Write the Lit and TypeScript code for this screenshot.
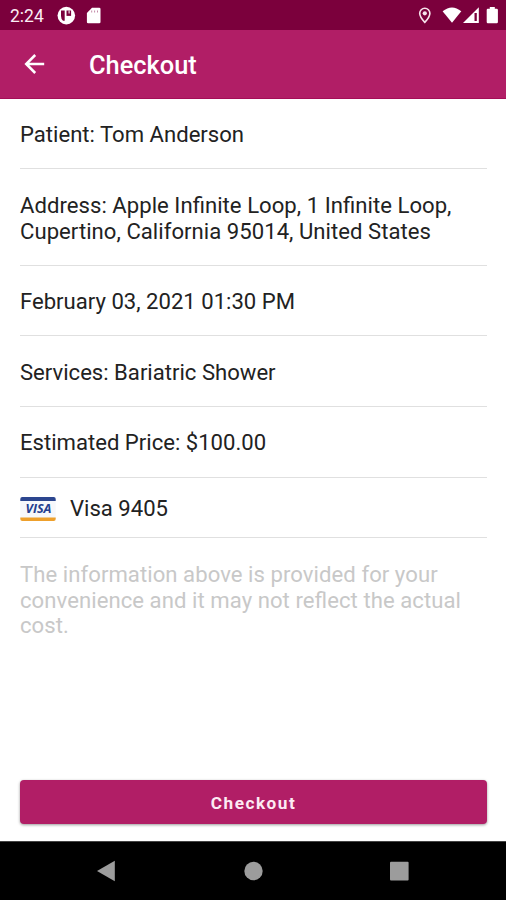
import { LitElement, html, css, svg } from "lit";
import { customElement, property } from "lit/decorators.js";

@customElement("status-bar")
class StatusBar extends LitElement {
  static styles = css`
    :host {
      display: flex;
      align-items: center;
      height: 30px;
      background: #7b003c;
      color: #fbeef4;
      font: 400 17.5px/30px Roboto, sans-serif;
    }
    .time { margin-left: 10px; width: 47px; padding-top: 2px; white-space: nowrap; }
    .left { display: block; width: 46px; height: 30px; }
    .right { display: block; width: 92px; height: 30px; margin-left: auto; }
  `;
  render() {
    return html`
      <span class="time">2:24</span>
      <svg class="left" viewBox="57 0 46 30">
        <circle cx="66.3" cy="15.6" r="8.8" fill="#fff" />
        <path d="M61 10.5h3.7v10.2H63a6 6 0 0 1-2-4.6z" fill="#7b003c" />
        <path d="M66.5 10.5h4.6v5.4h-4.6z" fill="#7b003c" />
        <path d="M68.6 10.500h1v3h-1z" fill="#fff" />
        <path d="M92 7.8h7.2a1.3 1.3 0 0 1 1.3 1.3v12.8a1.3 1.3 0 0 1-1.300 1.300h-11a1.300 1.300 0 0 1-1.300-1.300v-9z" fill="#fff" />
        <path d="M91.700 10.500v2M94.600 10.500v2M97.500 10.500v2" stroke="#c48aa8" stroke-width="1" />
      </svg>
      <svg class="right" viewBox="414 0 92 30">
        <path d="M424.800 8.200a5.100 5.100 0 0 0-5.100 5.100c0 3.700 5.100 9.100 5.100 9.100s5.100-5.400 5.100-9.100a5.100 5.100 0 0 0-5.100-5.100z" fill="none" stroke="#f7e3ec" stroke-width="1.600" />
        <circle cx="424.800" cy="13.300" r="2.100" fill="#f7e3ec" />
        <path d="M442.600 11.300Q452 3.700 461.300 11.300L452 22.800z" fill="#fff" />
        <path d="M478.800 7.200v15.800H463z" fill="#fff" />
        <path d="M474.500 13h2.300v8h-2.300z" fill="#7b003c" />
        <path d="M489.800 7h5v1.700h1.900a1.200 1.200 0 0 1 1.200 1.200v12.100a1.200 1.200 0 0 1-1.200 1.200h-8.800a1.200 1.200 0 0 1-1.200-1.200V9.900a1.200 1.200 0 0 1 1.200-1.200h1.900z" fill="#fff" />
      </svg>
    `;
  }
}

@customElement("app-bar")
class AppBar extends LitElement {
  @property() heading = "";
  static styles = css`
    :host {
      display: flex;
      align-items: center;
      box-sizing: border-box;
      height: 69px;
      padding-left: 23px;
      background: #b11e66;
      border-bottom: 1px solid #a40e57;
      color: #fff;
    }
    .back { width: 24px; height: 24px; margin-right: 42px; margin-bottom: 1px; }
    h1 { margin: 0; padding-top: 1px; font: 500 25.4px/32px Roboto, sans-serif; }
  `;
  render() {
    return html`
      <svg class="back" viewBox="0 0 24 24" fill="none" stroke="#fff" stroke-width="2.500">
        <path d="M21.200 12H3.200M12.200 3L3.200 12l9 9" />
      </svg>
      <h1>${this.heading}</h1>
    `;
  }
}

@customElement("nav-bar")
class NavBar extends LitElement {
  static styles = css`
    :host {
      display: flex;
      justify-content: space-between;
      align-items: center;
      box-sizing: border-box;
      height: 59px;
      padding: 0 95px;
      background: #000;
      border-top: 1px solid #444;
    }
    svg { width: 24px; height: 24px; fill: #9c9c9c; }
  `;
  render() {
    const shapes = [
      svg`<path d="M2 12L19.800 1.800v20.400z" />`,
      svg`<circle cx="12.500" cy="12" r="9.200" />`,
      svg`<rect x="3" y="2.800" width="18.600" height="18.600" rx="1" />`,
    ];
    return shapes.map((s) => html`<svg viewBox="0 0 24 24">${s}</svg>`);
  }
}

@customElement("app-root")
class AppRoot extends LitElement {
  static styles = css`
    :host {
      display: flex;
      flex-direction: column;
      height: 900px;
      background: #fff;
      font: 400 22.1px/25.7px Roboto, sans-serif;
      color: #222;
    }
    main { flex: 1; display: flex; flex-direction: column; padding: 0 19px 17px 20px; }
    .row { box-sizing: border-box; height: 70.800px; padding-top: 23.400px; border-bottom: 1.500px solid #e0e0e0; white-space: nowrap; }
    .first { height: 70px; padding-top: 23.300px; }
    .address { height: 96.500px; padding-top: 24px; white-space: pre-line; letter-spacing: 0.040px; font-feature-settings: "liga"; }
    .card { display: flex; align-items: center; height: 60.500px; padding: 2px 0 0; gap: 14px; }
    .visa { width: 36px; height: 26px; }
    .mark { font: italic 700 12px "Open Sans", sans-serif; fill: #263f8f; }
    .note { margin: 23.500px 0 0; color: #c8c8c8; white-space: pre-line; letter-spacing: 0.060px; font-feature-settings: "liga"; }
    button {
      margin-top: auto;
      height: 44px;
      padding: 2px 0 0;
      border: 0;
      border-radius: 4px;
      background: #b11e66;
      box-shadow: 0 1px 3px rgba(0, 0, 0, 0.4);
      color: #fdeaf4;
      font: 700 17.2px/22px Roboto, sans-serif;
      letter-spacing: 1.500px;
    }
  `;
  render() {
    return html`
      <status-bar></status-bar>
      <app-bar heading="Checkout"></app-bar>
      <main>
        <div class="row first">Patient: Tom Anderson</div>
        <div class="row address">${"Address: Apple Infinite Loop, 1 Infinite Loop,\nCupertino, California 95014, United States"}</div>
        <div class="row">February 03, 2021 01:30 PM</div>
        <div class="row">Services: Bariatric Shower</div>
        <div class="row">Estimated Price: $100.00</div>
        <div class="row card">
          <svg class="visa" viewBox="0 0 36 26">
            <rect x="0.300" y="1" width="35.400" height="24" rx="2" fill="#f7f8fb" />
            <path d="M0.300 5V3a2 2 0 0 1 2-2h31.400a2 2 0 0 1 2 2v2z" fill="#2c468f" />
            <path d="M0.300 21.500v1.500a2 2 0 0 0 2 2h31.400a2 2 0 0 0 2-2v-1.500z" fill="#eea02c" />
            <text class="mark" x="5.500" y="17.300" textLength="26" lengthAdjust="spacingAndGlyphs">VISA</text>
          </svg>
          <span>Visa 9405</span>
        </div>
        <p class="note">${"The information above is provided for your\nconvenience and it may not reflect the actual\ncost."}</p>
        <button>Checkout</button>
      </main>
      <nav-bar></nav-bar>
    `;
  }
}
